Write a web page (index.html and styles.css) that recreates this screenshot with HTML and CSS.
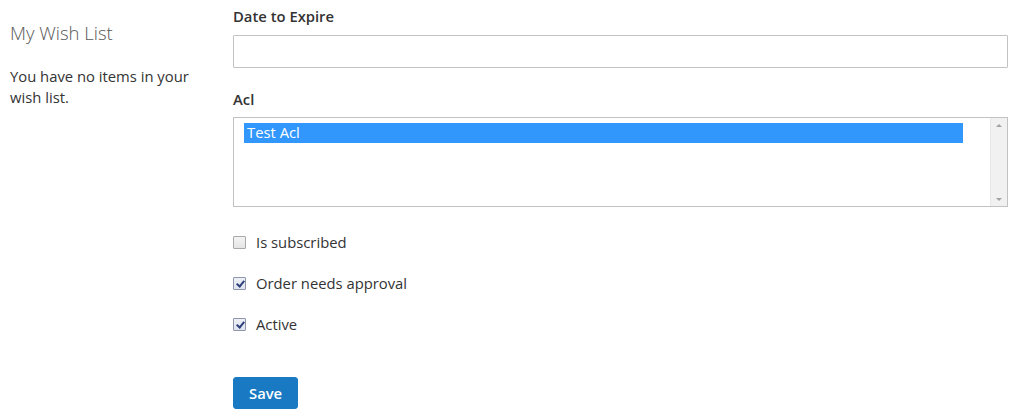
FILE: index.html
```html
<!DOCTYPE html>
<html lang="en">
<head>
    <meta charset="UTF-8">
    <meta name="viewport" content="width=device-width, initial-scale=1.0">
    <title>Edit Customer</title>
    <link rel="stylesheet" href="styles.css">
</head>
<body>
    <div class="page">
        <aside class="sidebar">
            <div class="block-title">My Wish List</div>
            <p class="empty">You have no items in your wish list.</p>
        </aside>

        <main class="main">
            <form class="form-edit">
                <div class="field">
                    <label class="label" for="date-expire">Date to Expire</label>
                    <input type="text" id="date-expire" class="input-text">
                </div>

                <div class="field">
                    <label class="label">Acl</label>
                    <div class="listbox">
                        <div class="options">
                            <div class="option selected">Test Acl</div>
                        </div>
                        <div class="scrollbar">
                            <span class="arrow up"></span>
                            <span class="arrow down"></span>
                        </div>
                    </div>
                </div>

                <div class="choices">
                    <label class="choice">
                        <input type="checkbox" class="checkbox">
                        Is subscribed
                    </label>
                    <label class="choice">
                        <input type="checkbox" class="checkbox" checked>
                        Order needs approval
                    </label>
                    <label class="choice">
                        <input type="checkbox" class="checkbox" checked>
                        Active
                    </label>
                </div>

                <button type="submit" class="action-save">Save</button>
            </form>
        </main>
    </div>
</body>
</html>
```

FILE: styles.css
```css
/* Mise en forme générale */
body {
    font-family: 'Open Sans', 'Liberation Sans', sans-serif;
    font-size: 14.8px;
    line-height: 20px;
    margin: 0;
    padding: 0;
    background: #fff;
    color: #333;
}

.page {
    display: flex;
}

.sidebar {
    width: 223px;
    padding-left: 10px;
    flex-shrink: 0;
}

.block-title {
    font-size: 18.5px;
    font-weight: 300;
    line-height: 24px;
    color: #575757;
    margin-top: 21px;
}

.empty {
    max-width: 200px;
    margin: 21px 0 0;
    line-height: 21px;
}

.main {
    flex: 1;
    margin-right: 16px;
    padding-top: 6px;
}

.field {
    margin-bottom: 21px;
}

.label {
    display: block;
    font-weight: 600;
    margin-bottom: 9px;
}

.input-text {
    display: block;
    box-sizing: border-box;
    width: 100%;
    height: 33px;
    border: 1px solid #c2c2c2;
    border-radius: 1px;
    padding: 0 9px;
    font-family: inherit;
    font-size: 14px;
    outline: none;
}

.listbox {
    display: flex;
    height: 90px;
    box-sizing: border-box;
    border: 1px solid #c2c2c2;
    margin-top: -1px;
}

.options {
    flex: 1;
    padding: 5px 27px 0 10px;
}

.option {
    height: 20px;
    line-height: 19px;
    padding-left: 3px;
}

.option.selected {
    background: #3297fd;
    color: #fff;
}

.scrollbar {
    width: 16px;
    background: #f1f1f1;
    border-left: 1px solid #e8e8e8;
    display: flex;
    flex-direction: column;
    justify-content: space-between;
    align-items: center;
    padding: 6px 0 5px;
}

.arrow {
    width: 0;
    height: 0;
    border-left: 3px solid transparent;
    border-right: 3px solid transparent;
}

.arrow.up {
    border-bottom: 3px solid #a3a3a3;
}

.arrow.down {
    border-top: 3px solid #a3a3a3;
}

.choices {
    display: flex;
    flex-direction: column;
    gap: 21px;
    margin-top: 25px;
}

.choice {
    display: flex;
    align-items: center;
    height: 20px;
}

.checkbox {
    appearance: none;
    -webkit-appearance: none;
    width: 13px;
    height: 13px;
    margin: 0 10px 0 0;
    border: 1px solid #a9a9a9;
    border-radius: 1px;
    background: linear-gradient(#f4f4f4, #e4e4e4);
    box-sizing: border-box;
}

.checkbox:checked {
    background: linear-gradient(#eef0f6, #dfe3ee);
    border-color: #8e96ad;
}

.checkbox:checked::after {
    content: "";
    display: block;
    width: 3px;
    height: 6px;
    margin: 1px 0 0 3.5px;
    border: solid #2d3f7a;
    border-width: 0 2px 2px 0;
    transform: rotate(40deg);
}

.action-save {
    margin-top: 43px;
    height: 32px;
    padding: 0 15px;
    background: #1979c3;
    border: 1px solid #1979c3;
    border-radius: 3px;
    color: #fff;
    font-family: inherit;
    font-size: 14.8px;
    font-weight: 600;
    cursor: pointer;
}

.action-save:hover {
    background: #006bb4;
}
```
